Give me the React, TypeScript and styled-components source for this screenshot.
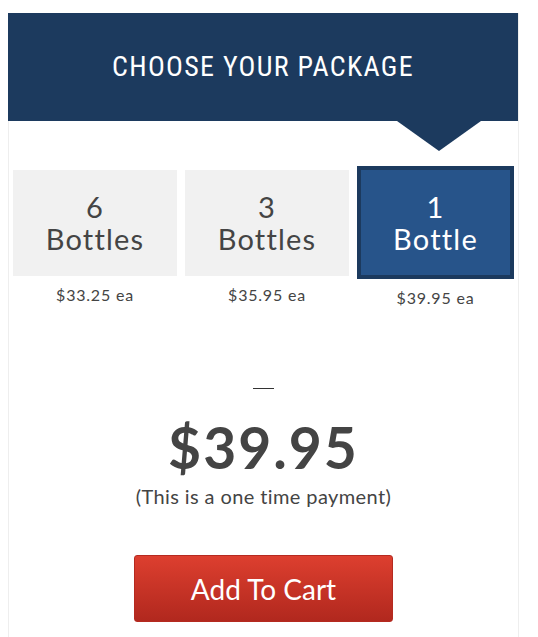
import React from 'react';
import styled, { createGlobalStyle } from 'styled-components';

interface PackageOption {
  count: string;
  label: string;
  price: string;
}

const options: PackageOption[] = [
  { count: '6', label: 'Bottles', price: '$33.25' },
  { count: '3', label: 'Bottles', price: '$35.95' },
  { count: '1', label: 'Bottle', price: '$39.95' },
];

const GlobalStyle = createGlobalStyle`
  body {
    margin: 8px;
    background: #ffffff;
    font-family: Lato, "Open Sans", sans-serif;
    color: #444444;
  }
`;

const App = () => {
  const selectedIndex = 2;

  return (
    <>
      <GlobalStyle />
      <Card>
        <Header>
          <h2>CHOOSE YOUR PACKAGE</h2>
        </Header>
        <OptionRow>
          {options.map((option, index) => (
            <OptionColumn key={option.count}>
              <OptionBox $selected={index === selectedIndex}>
                <span>{option.count}</span>
                <span>{option.label}</span>
              </OptionBox>
              <EachPrice>
                {option.price} <small>ea</small>
              </EachPrice>
            </OptionColumn>
          ))}
        </OptionRow>
        <Summary>
          <Rule />
          <TotalPrice>{options[selectedIndex].price}</TotalPrice>
          <PaymentNote>(This is a one time payment)</PaymentNote>
          <CartButton type='button'>Add To Cart</CartButton>
        </Summary>
      </Card>
    </>
  );
};

const Card = styled.div`
  margin-top: 5px;
  width: 509px;
  border-left: 1px solid #eeeeee;
  border-right: 1px solid #eeeeee;
  padding-bottom: 20px;
`;

const Header = styled.div`
  position: relative;
  height: 108px;
  margin-left: -1px;
  width: 510px;
  background: #1c3a5e;
  display: flex;
  align-items: center;
  justify-content: center;

  h2 {
    margin: 0;
    color: #ffffff;
    font-family: "Roboto Condensed", "Liberation Sans Narrow", "DejaVu Sans Condensed", Roboto, sans-serif;
    font-weight: 400;
    font-size: 28px;
    letter-spacing: 1.3px;
    padding-bottom: 2px;
  }

  &::after {
    content: '';
    position: absolute;
    top: 100%;
    left: 389px;
    border-left: 42px solid transparent;
    border-right: 42px solid transparent;
    border-top: 30px solid #1c3a5e;
  }
`;

const OptionRow = styled.div`
  display: grid;
  grid-template-columns: 164px 164px 157px;
  column-gap: 8px;
  padding: 0 4px;
  margin-top: 45px;
`;

const OptionColumn = styled.div`
  display: flex;
  flex-direction: column;
  align-items: stretch;
`;

const OptionBox = styled.div<{ $selected: boolean }>`
  box-sizing: border-box;
  display: flex;
  flex-direction: column;
  align-items: center;
  justify-content: center;
  margin-top: ${props => (props.$selected ? '0' : '4px')};
  height: ${props => (props.$selected ? '113px' : '106px')};
  background: ${props => (props.$selected ? '#27548a' : '#f1f1f1')};
  border: ${props => (props.$selected ? '4px solid #1c3a5e' : 'none')};
  color: ${props => (props.$selected ? '#ffffff' : '#444444')};
  font-size: 29px;
  line-height: 32px;
  letter-spacing: 1.2px;
  cursor: pointer;
`;

const EachPrice = styled.div`
  margin-top: 9px;
  text-align: center;
  font-size: 16px;
  line-height: 20px;
  letter-spacing: 0.8px;
  color: #444444;

  small {
    font-size: 16px;
  }
`;

const Summary = styled.div`
  display: flex;
  flex-direction: column;
  align-items: center;
  margin-top: 80px;
`;

const Rule = styled.div`
  width: 21px;
  height: 1px;
  background: #333333;
`;

const TotalPrice = styled.div`
  margin-top: 26px;
  font-size: 57px;
  font-weight: 700;
  line-height: 64px;
  letter-spacing: 2px;
  color: #444444;
`;

const PaymentNote = styled.div`
  margin-top: 5px;
  font-size: 20px;
  line-height: 24px;
  letter-spacing: 0.4px;
  color: #444444;
`;

const CartButton = styled.button`
  margin-top: 47px;
  width: 259px;
  height: 67px;
  border: 1px solid #b52a20;
  border-radius: 3px;
  background: linear-gradient(to bottom, #dd3f2f, #b1281e);
  color: #ffffff;
  font-family: Lato, "Open Sans", sans-serif;
  font-size: 28px;
  cursor: pointer;
`;

export default App;
